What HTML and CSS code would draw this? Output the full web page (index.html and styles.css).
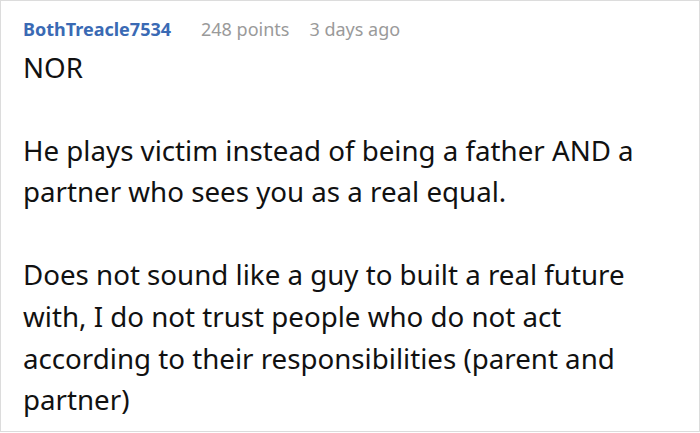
FILE: index.html
```html
<!DOCTYPE html>
<html lang="en">
<head>
<meta charset="utf-8">
<title>Comment</title>
<link rel="stylesheet" href="styles.css">
</head>
<body>
<div class="comment">
  <div class="meta">
    <span class="author">BothTreacle7534</span>
    <span class="points">248 points</span>
    <span class="time">3 days ago</span>
  </div>
  <div class="body">
    <p>NOR</p>
    <p>He plays victim instead of being a father AND a partner who sees you as a real equal.</p>
    <p>Does not sound like a guy to built a real future with, I do not trust people who do not act according to their responsibilities (parent and partner)</p>
  </div>
</div>
</body>
</html>
```
FILE: styles.css
```css
html, body {
  margin: 0;
  padding: 0;
  background: #fff;
}
.comment {
  box-sizing: border-box;
  width: 700px;
  height: 432px;
  border: 1px solid #dcdcdc;
  padding: 15px 22px 0 22px;
  font-family: "Noto Sans", sans-serif;
  overflow: hidden;
}
.meta {
  display: flex;
  gap: 20px;
  font-size: 18px;
  line-height: 27px;
}
.author {
  color: #3a6ab4;
  font-weight: 700;
}
.points, .time {
  color: #9a9a9a;
}
.points {
  margin-left: 10px;
}
.body {
  margin-top: 3.5px;
  font-size: 27.7px;
  line-height: 41.6px;
  color: #111;
}
.body p {
  margin: 0 0 41.6px 0;
}
```
